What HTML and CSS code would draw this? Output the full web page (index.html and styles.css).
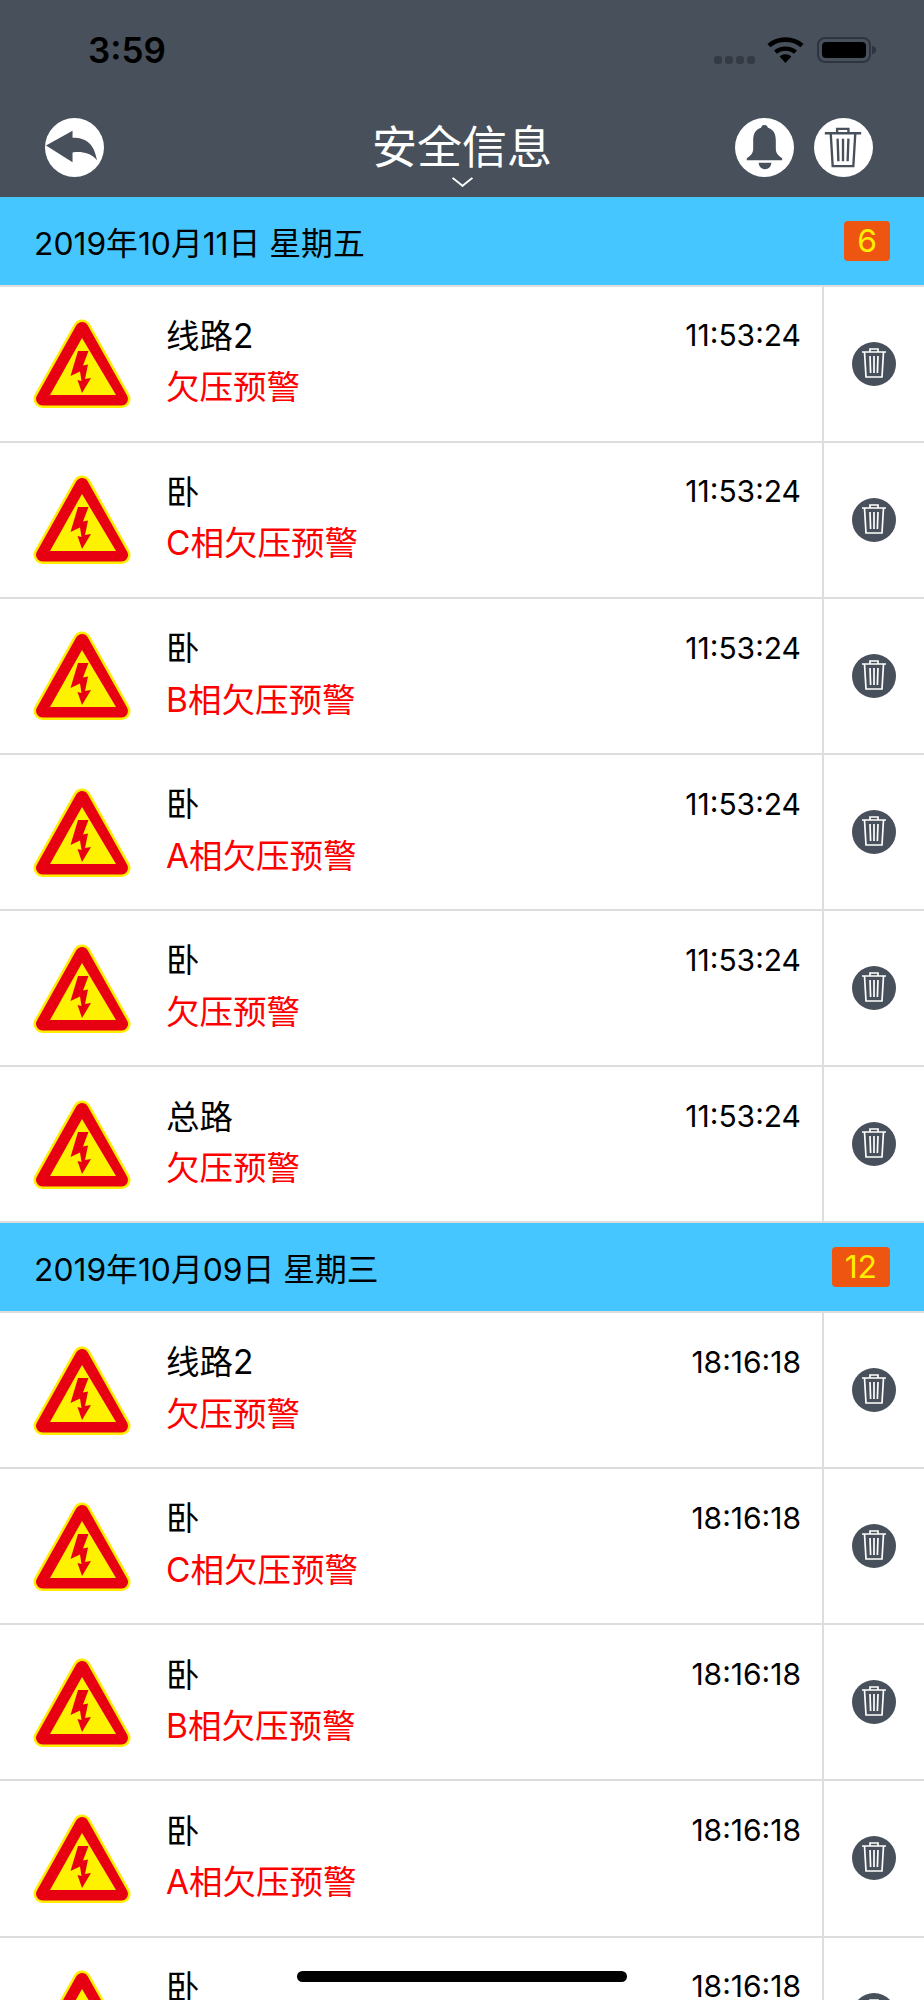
FILE: index.html
```html
<!DOCTYPE html>
<html lang="zh-CN">
<head>
    <meta charset="UTF-8">
    <meta name="viewport" content="width=device-width, initial-scale=1.0">
    <title>安全信息</title>
    <link rel="stylesheet" href="styles.css">
</head>
<body>
    <svg class="defs" width="0" height="0">
        <symbol id="warn" viewBox="0 0 98 89">
            <path d="M49 9.500 L88.500 80 H9.500 Z" fill="#ffee00" stroke="#ffee00" stroke-width="18" stroke-linejoin="round"/>
            <path d="M49 9.500 L88.500 80 H9.500 Z" fill="#e60012" stroke="#e60012" stroke-width="13" stroke-linejoin="round"/>
            <path d="M49 19 L83 76 H17 Z" fill="#fff200"/>
            <path d="M45 32 L55.500 32 L50 46.500 L55 45.500 L52 60 L58 59 L49 74 L44.500 61 L48.500 62 L47 52.500 L37.500 57 Z" fill="#e60012"/>
        </symbol>
        <symbol id="trash" viewBox="0 0 44 44">
            <path d="M18 9.500 V7 H26 V9.500 M10 10 H34 M12.500 10 L14 35 H30 L31.500 10 M18 14 L18.600 31 M22 14 V31 M26 14 L25.400 31" fill="none" stroke="currentColor" stroke-width="1.700"/>
        </symbol>
    </svg>

    <div id="page">
        <header class="top">
            <div class="status">
                <span class="clock">3:59</span>
                <div class="status-icons">
                    <div class="signal"><i></i><i></i><i></i><i></i></div>
                    <svg class="wifi" width="37" height="26" viewBox="0 0 37 26">
                        <path d="M18.500 26 L12.600 19.500 C16 16.600 21 16.600 24.400 19.500 Z" fill="#000"/>
                        <path d="M8.500 15.200 C14 10.400 23 10.400 28.500 15.200" fill="none" stroke="#000" stroke-width="4.400"/>
                        <path d="M2 8.600 C11 0.600 26 0.600 35 8.600" fill="none" stroke="#000" stroke-width="4.600"/>
                    </svg>
                    <div class="battery"><div class="battery-fill"></div></div>
                    <div class="battery-nub"></div>
                </div>
            </div>
            <nav class="navbar">
                <div class="nav-left">
                    <svg class="nav-btn" width="59" height="59" viewBox="0 0 60 60">
                        <circle cx="30" cy="30" r="30" fill="#fff"/>
                        <path d="M1 28 L28 13 V20 C44 20 50 28 53 43 C46 35 37 34 28 35 V45 Z" fill="#48505b"/>
                    </svg>
                </div>
                <div class="title">安全信息<span class="chevron"></span></div>
                <div class="nav-right">
                    <svg class="nav-btn" width="59" height="59" viewBox="0 0 60 60">
                        <circle cx="30" cy="30" r="30" fill="#fff"/>
                        <path d="M30 7 C32 7 33 8 33.500 10 C39 11.500 41.500 16 41.500 23 V31 C41.500 36 44 38 48 41 V43 H12 V41 C16 38 18.500 36 18.500 31 V23 C18.500 16 21 11.500 26.500 10 C27 8 28 7 30 7 Z" fill="#48505b"/>
                        <path d="M24 45.500 H37 C36.500 50 34 52 30.500 52 C27 52 24.500 50 24 45.500 Z" fill="#48505b"/>
                    </svg>
                    <svg class="nav-btn" width="59" height="59" viewBox="0 0 60 60">
                        <circle cx="30" cy="30" r="30" fill="#fff"/>
                        <path d="M23.500 14.500 V11 H35 V14.500 M11 15.500 H48 M17 15.500 L19 49 H40 L42 15.500 M24 21 L24.800 44 M29.500 21 V44 M35 21 L34.200 44" fill="none" stroke="#48505b" stroke-width="2.400"/>
                    </svg>
                </div>
            </nav>
        </header>

        <section class="day">
            <div class="day-head"><span>2019年10月11日 星期五</span><span class="badge">6</span></div>
            <div class="row">
                <div class="row-main">
                    <svg class="warn-icon"><use href="#warn"/></svg>
                    <div class="row-text">
                        <div class="row-line"><span class="name">线路2</span><span class="time">11:53:24</span></div>
                        <div class="msg">欠压预警</div>
                    </div>
                </div>
                <div class="row-del"><span class="del-btn"><svg width="44" height="44"><use href="#trash"/></svg></span></div>
            </div>
            <div class="row">
                <div class="row-main">
                    <svg class="warn-icon"><use href="#warn"/></svg>
                    <div class="row-text">
                        <div class="row-line"><span class="name">卧</span><span class="time">11:53:24</span></div>
                        <div class="msg">C相欠压预警</div>
                    </div>
                </div>
                <div class="row-del"><span class="del-btn"><svg width="44" height="44"><use href="#trash"/></svg></span></div>
            </div>
            <div class="row">
                <div class="row-main">
                    <svg class="warn-icon"><use href="#warn"/></svg>
                    <div class="row-text">
                        <div class="row-line"><span class="name">卧</span><span class="time">11:53:24</span></div>
                        <div class="msg">B相欠压预警</div>
                    </div>
                </div>
                <div class="row-del"><span class="del-btn"><svg width="44" height="44"><use href="#trash"/></svg></span></div>
            </div>
            <div class="row">
                <div class="row-main">
                    <svg class="warn-icon"><use href="#warn"/></svg>
                    <div class="row-text">
                        <div class="row-line"><span class="name">卧</span><span class="time">11:53:24</span></div>
                        <div class="msg">A相欠压预警</div>
                    </div>
                </div>
                <div class="row-del"><span class="del-btn"><svg width="44" height="44"><use href="#trash"/></svg></span></div>
            </div>
            <div class="row">
                <div class="row-main">
                    <svg class="warn-icon"><use href="#warn"/></svg>
                    <div class="row-text">
                        <div class="row-line"><span class="name">卧</span><span class="time">11:53:24</span></div>
                        <div class="msg">欠压预警</div>
                    </div>
                </div>
                <div class="row-del"><span class="del-btn"><svg width="44" height="44"><use href="#trash"/></svg></span></div>
            </div>
            <div class="row">
                <div class="row-main">
                    <svg class="warn-icon"><use href="#warn"/></svg>
                    <div class="row-text">
                        <div class="row-line"><span class="name">总路</span><span class="time">11:53:24</span></div>
                        <div class="msg">欠压预警</div>
                    </div>
                </div>
                <div class="row-del"><span class="del-btn"><svg width="44" height="44"><use href="#trash"/></svg></span></div>
            </div>
        </section>

        <section class="day">
            <div class="day-head"><span>2019年10月09日 星期三</span><span class="badge">12</span></div>
            <div class="row">
                <div class="row-main">
                    <svg class="warn-icon"><use href="#warn"/></svg>
                    <div class="row-text">
                        <div class="row-line"><span class="name">线路2</span><span class="time">18:16:18</span></div>
                        <div class="msg">欠压预警</div>
                    </div>
                </div>
                <div class="row-del"><span class="del-btn"><svg width="44" height="44"><use href="#trash"/></svg></span></div>
            </div>
            <div class="row">
                <div class="row-main">
                    <svg class="warn-icon"><use href="#warn"/></svg>
                    <div class="row-text">
                        <div class="row-line"><span class="name">卧</span><span class="time">18:16:18</span></div>
                        <div class="msg">C相欠压预警</div>
                    </div>
                </div>
                <div class="row-del"><span class="del-btn"><svg width="44" height="44"><use href="#trash"/></svg></span></div>
            </div>
            <div class="row">
                <div class="row-main">
                    <svg class="warn-icon"><use href="#warn"/></svg>
                    <div class="row-text">
                        <div class="row-line"><span class="name">卧</span><span class="time">18:16:18</span></div>
                        <div class="msg">B相欠压预警</div>
                    </div>
                </div>
                <div class="row-del"><span class="del-btn"><svg width="44" height="44"><use href="#trash"/></svg></span></div>
            </div>
            <div class="row">
                <div class="row-main">
                    <svg class="warn-icon"><use href="#warn"/></svg>
                    <div class="row-text">
                        <div class="row-line"><span class="name">卧</span><span class="time">18:16:18</span></div>
                        <div class="msg">A相欠压预警</div>
                    </div>
                </div>
                <div class="row-del"><span class="del-btn"><svg width="44" height="44"><use href="#trash"/></svg></span></div>
            </div>
            <div class="row">
                <div class="row-main">
                    <svg class="warn-icon"><use href="#warn"/></svg>
                    <div class="row-text">
                        <div class="row-line"><span class="name">卧</span><span class="time">18:16:18</span></div>
                        <div class="msg">欠压预警</div>
                    </div>
                </div>
                <div class="row-del"><span class="del-btn"><svg width="44" height="44"><use href="#trash"/></svg></span></div>
            </div>
        </section>

        <div class="home-bar"></div>
    </div>
</body>
</html>
```

FILE: styles.css
```css
*{
    margin: 0;
    padding: 0;
    box-sizing: border-box;
}
body{
    background-color: white;
    font-family: Inter, "Noto Sans CJK SC", sans-serif;
    color: black;
}
.defs{
    display: block;
    height: 0;
}
#page{
    position: relative;
    width: 924px;
    height: 2000px;
    overflow: hidden;
}

/* header */
.top{
    height: 197px;
    background-color: #48505b;
}
.status{
    height: 100px;
    display: flex;
    justify-content: space-between;
    padding: 37px 48px 0 88px;
}
.clock{
    font-size: 35px;
    font-weight: 600;
    line-height: 26px;
}
.status-icons{
    display: flex;
    align-items: flex-start;
    height: 26px;
}
.signal{
    display: flex;
    gap: 3px;
    margin: 19px 12px 0 0;
}
.signal i{
    display: block;
    width: 8px;
    height: 8px;
    border-radius: 3px;
    background-color: #353b44;
}
.battery{
    width: 54px;
    height: 26px;
    margin-left: 13px;
    padding: 3px;
    border: 2px solid #2f353e;
    border-radius: 8px;
}
.battery-fill{
    height: 100%;
    background-color: black;
    border-radius: 4px;
}
.battery-nub{
    width: 4px;
    height: 8px;
    margin: 9px 0 0 1px;
    background-color: #2f353e;
    border-radius: 0 4px 4px 0;
}
.navbar{
    height: 59px;
    margin-top: 18px;
    padding: 0 51px 0 45px;
    display: grid;
    grid-template-columns: 1fr auto 1fr;
    align-items: center;
}
.nav-btn{
    display: block;
}
.nav-right{
    display: flex;
    justify-content: flex-end;
    gap: 20px;
}
.title{
    position: relative;
    color: white;
    font-size: 45px;
    line-height: 59px;
    left: 3px;
}
.chevron{
    position: absolute;
    left: 50%;
    top: 53px;
    width: 15px;
    height: 15px;
    margin-left: -7px;
    border-right: 2px solid white;
    border-bottom: 2px solid white;
    transform: scaleY(0.8) rotate(45deg);
}

/* day group */
.day-head{
    height: 89.500px;
    padding: 0 34px;
    background-color: #45c6ff;
    border-bottom: 2px solid #dddddd;
    display: flex;
    justify-content: space-between;
    align-items: center;
    font-size: 31.800px;
}
.badge{
    min-width: 46px;
    height: 40px;
    padding: 0 13px;
    background-color: #ee5510;
    border-radius: 4px;
    color: #ffee00;
    line-height: 40px;
    text-align: center;
}
.row{
    height: 156.170px;
    display: flex;
    border-bottom: 2px solid #dddddd;
}
.row-main{
    flex: 1;
    display: flex;
    align-items: center;
    padding: 0 21px 0 33px;
}
.warn-icon{
    width: 98px;
    height: 89px;
    flex-shrink: 0;
}
.row-text{
    flex: 1;
    margin-left: 35px;
    margin-top: -5px;
}
.row-line{
    display: flex;
    justify-content: space-between;
    align-items: center;
    height: 51px;
}
.name{
    font-size: 33.500px;
    margin-top: -2px;
}
.time{
    font-size: 30px;
    margin-top: 2px;
}
.msg{
    font-size: 33.500px;
    color: #ff0000;
    line-height: 51px;
    margin-top: 2.500px;
}
.row-del{
    width: 102px;
    border-left: 2px solid #dddddd;
    display: flex;
    justify-content: center;
    align-items: center;
}
.del-btn{
    display: block;
    width: 44px;
    height: 44px;
    border-radius: 50%;
    background-color: #48505b;
    color: white;
}
.del-btn svg{
    display: block;
}

.home-bar{
    position: absolute;
    left: 297px;
    top: 1971px;
    width: 330px;
    height: 11px;
    background-color: black;
    border-radius: 6px;
}
```
